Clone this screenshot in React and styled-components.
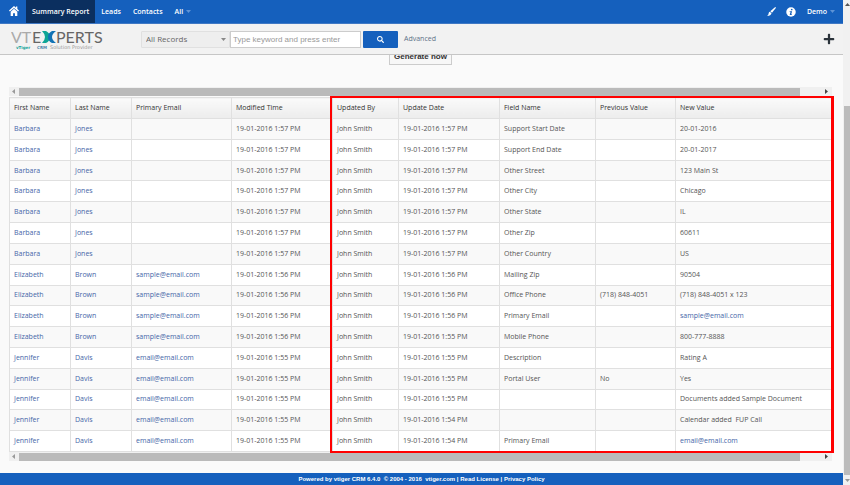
import React, {useState} from 'react';
import styled, {createGlobalStyle} from 'styled-components';
import {FaSearch, FaPlus} from 'react-icons/fa';

const GlobalStyle = createGlobalStyle`
  * { box-sizing: border-box; }
  body {
    margin: 0;
    background: #fafafa;
    color: #555;
    font-family: "Open Sans", "Noto Sans", sans-serif;
    font-size: 7px;
    line-height: 10px;
  }
  a { color: #4566a8; text-decoration: none; }
`;

const Shell = styled.div`
  display: flex;
  height: 100vh;
  overflow: hidden;
`;

const Page = styled.div`
  display: flex;
  flex: 1;
  flex-direction: column;
  min-width: 0;
`;

const Header = styled.header`
  position: relative;
  z-index: 2;
`;

const NavBar = styled.nav`
  display: flex;
  align-items: center;
  justify-content: space-between;
  height: 24px;
  background: #1560bd;
  border-bottom: 1px solid #3f78c4;
`;

const NavGroup = styled.div`
  display: flex;
  align-items: center;
  height: 100%;
  padding-right: ${props => props.$end ? '2px' : '0'};
`;

const NavLink = styled.a`
  display: flex;
  align-items: center;
  gap: 3px;
  height: 100%;
  padding: 0 ${props => props.$icon ? '5px' : '6px'};
  color: #fff;
  font-weight: 600;
  background: ${props => props.$active ? '#0b2f5f' : 'transparent'};
`;

const HomeLink = styled(NavLink)`
  padding: 0 7px 2px 9px;
`;

const ToolBar = styled.div`
  display: flex;
  align-items: center;
  height: 31px;
  padding: 0 8px 0 11px;
  background: #f2f2f2;
  border-bottom: 1px solid #c6c6c6;
`;

const LogoLink = styled.a`
  display: flex;
  margin-right: 34px;
`;

const SearchForm = styled.form`
  display: flex;
  align-items: center;
  flex: 1;
`;

const SelectBox = styled.div`
  display: flex;
  align-items: center;
  width: 89px;
  height: 17px;
  padding-right: 3px;
  background: #eee;
  border: 1px solid #e0e0e0;
  border-radius: 1px;
`;

const Select = styled.select`
  appearance: none;
  flex: 1;
  min-width: 0;
  padding: 0 4px;
  border: 0;
  background: transparent;
  color: #666;
  font: 8px/12px "Open Sans", sans-serif;
`;

const SearchInput = styled.input`
  width: 131px;
  height: 17px;
  padding: 0 2px;
  border: 1px solid #ccc;
  background: #fff;
  color: #555;
  font: 8px/12px "Liberation Sans", Arial, sans-serif;

  &::placeholder { color: #999; }
`;

const SearchButton = styled.button`
  display: flex;
  align-items: center;
  justify-content: center;
  width: 35px;
  height: 17px;
  margin: 0 6px 0 2px;
  padding: 0;
  border: 0;
  border-radius: 1px;
  background: #1560bd;
  color: #fff;
`;

const AdvancedLink = styled.a`
  color: #5e7187;
`;

const IconButton = styled.button`
  display: flex;
  padding: 0;
  border: 0;
  background: transparent;
  color: #2b333b;
`;

const Content = styled.main`
  flex: 1;
  margin-top: -7px;
  padding: 0 11px 0 9px;
`;

const ButtonRow = styled.div`
  display: flex;
  justify-content: center;
  margin-bottom: 22px;
`;

const GenerateButton = styled.button`
  height: 17px;
  padding: 0 4px;
  border: 1px solid #ccc;
  background: #f7f7f7;
  color: #333;
  font: bold 8px/12px "Liberation Sans", Arial, sans-serif;
`;

const ScrollRow = styled.div`
  display: flex;
  align-items: center;
  height: 9px;
  padding-right: 4px;
  background: #f0f0f0;
`;

const ScrollArrow = styled.svg`
  display: block;
  flex: none;
  margin: ${props => props.$left ? '0 3px' : '0'};
  fill: ${props => props.$left ? '#9a9a9a' : '#444'};
`;

const ScrollTrack = styled.div`
  flex: 1;
  height: 8px;
`;

const ScrollThumb = styled.div`
  width: 97%;
  height: 100%;
  background: #bababa;
`;

const TableBox = styled.div`
  position: relative;
  margin-top: 1px;
`;

const Table = styled.table`
  width: 100%;
  height: 355px;
  table-layout: fixed;
  border-collapse: collapse;
  border: 1px solid #e0e0e0;
`;

const HeadCell = styled.th`
  height: 21px;
  padding: 0 4px;
  border-left: 1px solid #e0e0e0;
  background: linear-gradient(#fafafa, #ececec);
  color: #333;
  font-weight: 400;
  text-align: left;
`;

const Row = styled.tr`
  background: #fff;

  &:nth-child(odd) { background: #f9f9f9; }
`;

const Cell = styled.td`
  padding: 0 4px;
  border-left: 1px solid #e0e0e0;
  border-top: 1px solid #e0e0e0;
  white-space: pre;
`;

// red frame round the update columns
const Highlight = styled.div`
  position: absolute;
  top: -1px;
  right: -2px;
  bottom: -1px;
  left: 321px;
  border: 2px solid #f00;
  border-right-width: 3px;
  pointer-events: none;
`;

const Footer = styled.footer`
  display: flex;
  align-items: center;
  justify-content: center;
  height: 12px;
  background: #1560bd;
  color: #fff;
  font: bold 6px/10px "Liberation Sans", Arial, sans-serif;
  white-space: pre;

  a { color: #fff; }
`;

const PageScroll = styled.div`
  display: flex;
  flex-direction: column;
  align-items: center;
  justify-content: space-between;
  width: 7px;
  padding: 3px 0 3px 1px;
  background: #f1f1f1;
`;

const PageThumb = styled.div`
  width: 100%;
  height: 77%;
  margin: auto 0 4px;
  background: #bcbcbc;
`;

const columns = [
  {name: 'First Name', width: 61},
  {name: 'Last Name', width: 61},
  {name: 'Primary Email', width: 100},
  {name: 'Modified Time', width: 101},
  {name: 'Updated By', width: 66},
  {name: 'Update Date', width: 101},
  {name: 'Field Name', width: 96},
  {name: 'Previous Value', width: 80},
  {name: 'New Value'}
]

const barbara = ['Barbara', 'Jones', '']
const elizabeth = ['Elizabeth', 'Brown', 'sample@email.com']
const jennifer = ['Jennifer', 'Davis', 'email@email.com']

const rows = [
  {who: barbara, modified: '1:57', updated: '1:57', field: 'Support Start Date', prev: '', next: '20-01-2016'},
  {who: barbara, modified: '1:57', updated: '1:57', field: 'Support End Date', prev: '', next: '20-01-2017'},
  {who: barbara, modified: '1:57', updated: '1:57', field: 'Other Street', prev: '', next: '123 Main St'},
  {who: barbara, modified: '1:57', updated: '1:57', field: 'Other City', prev: '', next: 'Chicago'},
  {who: barbara, modified: '1:57', updated: '1:57', field: 'Other State', prev: '', next: 'IL'},
  {who: barbara, modified: '1:57', updated: '1:57', field: 'Other Zip', prev: '', next: '60611'},
  {who: barbara, modified: '1:57', updated: '1:57', field: 'Other Country', prev: '', next: 'US'},
  {who: elizabeth, modified: '1:56', updated: '1:56', field: 'Mailing Zip', prev: '', next: '90504'},
  {who: elizabeth, modified: '1:56', updated: '1:56', field: 'Office Phone', prev: '(718) 848-4051', next: '(718) 848-4051 x 123'},
  {who: elizabeth, modified: '1:56', updated: '1:56', field: 'Primary Email', prev: '', next: 'sample@email.com'},
  {who: elizabeth, modified: '1:56', updated: '1:55', field: 'Mobile Phone', prev: '', next: '800-777-8888'},
  {who: jennifer, modified: '1:55', updated: '1:55', field: 'Description', prev: '', next: 'Rating A'},
  {who: jennifer, modified: '1:55', updated: '1:55', field: 'Portal User', prev: 'No', next: 'Yes'},
  {who: jennifer, modified: '1:55', updated: '1:55', field: '', prev: '', next: 'Documents added Sample Document'},
  {who: jennifer, modified: '1:55', updated: '1:54', field: '', prev: '', next: 'Calendar added  FUP Call'},
  {who: jennifer, modified: '1:55', updated: '1:54', field: 'Primary Email', prev: '', next: 'email@email.com'}
]

function Caret({color}) {
  return (
    <svg width="5" height="3" viewBox="0 0 5 3" fill={color} aria-hidden="true">
      <path d="M0 0h5L2.5 3z" />
    </svg>
  )
}

function HomeIcon() {
  return (
    <svg width="10" height="10" viewBox="0 0 18 18" fill="#fff" aria-hidden="true">
      <path d="M9 0 0 8l1.6 1.900L9 3.400l7.400 6.500L18 8l-3-2.700V1h-2.500v2.100z" />
      <path d="M9 5 3 10.300V18h4.300v-5h3.400v5H15v-7.700z" />
    </svg>
  )
}

function BrushIcon() {
  return (
    <svg width="9" height="9" viewBox="0 0 18 18" fill="#fff" aria-hidden="true">
      <path d="M16.500 0 18 1.500 10 11.600 6.600 8.300z" />
      <path d="M5.600 9.300 9 12.600Q8 17.500 0 17.800 3 15.800 3.200 12.800 3.600 10 5.600 9.300z" />
    </svg>
  )
}

function InfoIcon() {
  return (
    <svg width="10" height="10" viewBox="0 0 20 20" aria-hidden="true">
      <circle cx="10" cy="10" r="9.500" fill="#fff" />
      <circle cx="11.500" cy="5" r="1.700" fill="#1560bd" />
      <path d="M7.500 8.300h4.700l-1.700 6.200h1.500l-.4 1.500H7.300l1.700-6.200H7.100z" fill="#1560bd" />
    </svg>
  )
}

function Logo() {
  return (
    <svg width="96" height="24" viewBox="0 0 96 24" role="img" aria-label="VTExperts" fontFamily="Lato, sans-serif">
      <g fontSize="16">
        <text x="0" y="16" fill="#aaa">VT</text>
        <text x="21" y="16" fill="#666">E</text>
        <text x="45" y="16" fill="#666">PERTS</text>
      </g>
      <path d="M31 4h4q4 2 4 6t-4 6h-4q3-3 3-6t-3-6z" fill="#0fa596" />
      <path d="M45 4h-4q-4 2-4 6t4 6h4q-4-3-4-6t4-6z" fill="#1273b5" />
      <g fontFamily="DejaVu Sans, sans-serif">
        <text x="5" y="22" fill="#1ba39c" fontSize="4" fontWeight="700">vTiger</text>
        <text x="26" y="22" fill="#4c82a8" fontSize="4" fontWeight="700">CRM</text>
        <text x="39" y="22" fill="#999" fontSize="5">Solution Provider</text>
      </g>
    </svg>
  )
}

function HorizontalScroll() {
  return (
    <ScrollRow>
      <ScrollArrow $left width="4" height="5" viewBox="0 0 4 5"><path d="M3 0v5L0 2.500z" /></ScrollArrow>
      <ScrollTrack><ScrollThumb /></ScrollTrack>
      <ScrollArrow width="4" height="5" viewBox="0 0 4 5"><path d="M1 0v5l3-2.500z" /></ScrollArrow>
    </ScrollRow>
  )
}

function ReportTable() {
  return (
    <TableBox>
      <Table>
        <colgroup>
          {columns.map((c) => <col key={c.name} width={c.width} />)}
        </colgroup>
        <thead>
          <tr>
            {columns.map((c) => <HeadCell key={c.name} scope="col">{c.name}</HeadCell>)}
          </tr>
        </thead>
        <tbody>
          {rows.map((row, index) => (
            <Row key={index}>
              {row.who.map((text, i) => (
                <Cell key={i}>{text && <a href="#record">{text}</a>}</Cell>
              ))}
              <Cell>19-01-2016 {row.modified} PM</Cell>
              <Cell>John Smith</Cell>
              <Cell>19-01-2016 {row.updated} PM</Cell>
              <Cell>{row.field}</Cell>
              <Cell>{row.prev}</Cell>
              <Cell>{row.next.includes('@') ? <a href="#mail">{row.next}</a> : row.next}</Cell>
            </Row>
          ))}
        </tbody>
      </Table>
      <Highlight />
    </TableBox>
  )
}

function App() {
  const [keyword, setKeyword] = useState('');

  return (
    <>
      <GlobalStyle />
      <Shell>
        <Page>
          <Header>
            <NavBar>
              <NavGroup>
                <HomeLink href="#home" aria-label="Home"><HomeIcon /></HomeLink>
                <NavLink href="#summary" $active>Summary Report</NavLink>
                <NavLink href="#leads">Leads</NavLink>
                <NavLink href="#contacts">Contacts</NavLink>
                <NavLink href="#all">All <Caret color="#5e93d6" /></NavLink>
              </NavGroup>
              <NavGroup $end>
                <NavLink href="#theme" aria-label="Theme" $icon><BrushIcon /></NavLink>
                <NavLink href="#info" aria-label="Info" $icon><InfoIcon /></NavLink>
                <NavLink href="#user">Demo <Caret color="#5e93d6" /></NavLink>
              </NavGroup>
            </NavBar>
            <ToolBar>
              <LogoLink href="#home"><Logo /></LogoLink>
              <SearchForm onSubmit={(e) => e.preventDefault()}>
                <SelectBox>
                  <Select aria-label="Search in">
                    <option>All Records</option>
                  </Select>
                  <Caret color="#888" />
                </SelectBox>
                <SearchInput
                  aria-label="Keyword"
                  placeholder="Type keyword and press enter"
                  value={keyword}
                  onChange={(e) => setKeyword(e.target.value)}
                />
                <SearchButton aria-label="Search"><FaSearch size={7} /></SearchButton>
                <AdvancedLink href="#advanced">Advanced</AdvancedLink>
              </SearchForm>
              <IconButton aria-label="Quick create"><FaPlus size={12} /></IconButton>
            </ToolBar>
          </Header>
          <Content>
            <ButtonRow>
              <GenerateButton>Generate now</GenerateButton>
            </ButtonRow>
            <HorizontalScroll />
            <ReportTable />
            <HorizontalScroll />
          </Content>
          <Footer>
            Powered by vtiger CRM 6.4.0  © 2004 - 2016  <a href="#vtiger">vtiger.com</a> | <a href="#license">Read License</a> | <a href="#privacy">Privacy Policy</a>
          </Footer>
        </Page>
        <PageScroll>
          <svg width="5" height="3" viewBox="0 0 5 3" fill="#555"><path d="M0 3h5L2.500 0z" /></svg>
          <PageThumb />
          <Caret color="#999" />
        </PageScroll>
      </Shell>
    </>
  );
}


export default App;
